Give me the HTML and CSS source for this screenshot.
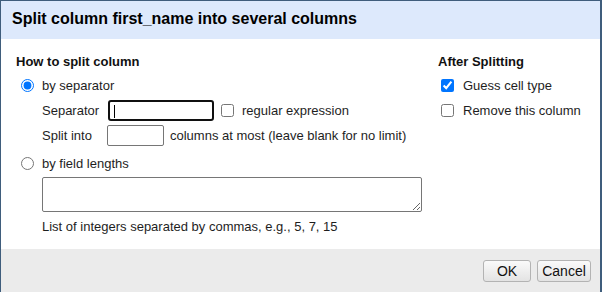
FILE: index.html
```html
<!DOCTYPE html>
<html lang="en">
<head>
  <meta charset="UTF-8">
  <title>Split column</title>
  <link rel="stylesheet" href="styles.css">
</head>
<body>
  <div class="dialog">
    <div class="header">Split column first_name into several columns</div>

    <div class="content">
      <div class="left">
        <h3>How to split column</h3>

        <label class="choice first">
          <input type="radio" name="mode" checked>
          <span>by separator</span>
        </label>

        <div class="field sep-row">
          <span class="field-label">Separator</span>
          <input type="text" class="text-input sep focused">
          <input type="checkbox" class="check">
          <span>regular expression</span>
        </div>

        <div class="field split-row">
          <span class="field-label">Split into</span>
          <input type="text" class="text-input count">
          <span>columns at most (leave blank for no limit)</span>
        </div>

        <label class="choice lengths">
          <input type="radio" name="mode">
          <span>by field lengths</span>
        </label>

        <textarea class="lengths-box"></textarea>
        <p class="hint">List of integers separated by commas, e.g., 5, 7, 15</p>
      </div>

      <div class="right">
        <h3>After Splitting</h3>
        <label class="option first">
          <input type="checkbox" class="check" checked>
          <span>Guess cell type</span>
        </label>
        <label class="option second">
          <input type="checkbox" class="check">
          <span>Remove this column</span>
        </label>
      </div>
    </div>

    <div class="footer">
      <button class="btn ok">OK</button>
      <button class="btn cancel">Cancel</button>
    </div>
  </div>
</body>
</html>
```

FILE: styles.css
```css
* {
  margin: 0;
  padding: 0;
  box-sizing: border-box;
}

body {
  font-family: 'Liberation Sans', Arial, sans-serif;
  font-size: 13px;
  color: #1e1e1e;
  background: white;
}

.dialog {
  width: 602px;
  height: 292px;
  border-top: 1px solid #3f5d7c;
  border-left: 1px solid #3f5d7c;
  border-right: 2px solid #3f5d7c;
  display: flex;
  flex-direction: column;
  overflow: hidden;
}

.header {
  height: 38px;
  flex-shrink: 0;
  background: #dde9fc;
  display: flex;
  align-items: center;
  padding-left: 11px;
  padding-bottom: 2px;
  font-size: 16px;
  font-weight: bold;
  color: #000;
}

.content {
  height: 210px;
  flex-shrink: 0;
  display: flex;
  padding: 15px 0 0 15px;
}

.left {
  width: 422px;
  display: flex;
  flex-direction: column;
}

h3 {
  font-size: 13px;
  line-height: 16px;
  font-weight: bold;
  color: #111;
}

.choice {
  display: flex;
  align-items: center;
  height: 16px;
}

.choice input {
  margin: 0 8px 0 5px;
  width: 13px;
  height: 13px;
  accent-color: #0075ff;
}

.choice.first {
  margin-top: 7px;
}

.choice.lengths {
  margin-top: 9px;
}

.field {
  display: flex;
  align-items: center;
  height: 22px;
  padding-left: 26px;
}

.sep-row {
  margin-top: 6px;
}

.split-row {
  margin-top: 3px;
}

.field-label {
  width: 65px;
  flex-shrink: 0;
}

.text-input {
  height: 21px;
  border: 1px solid #767676;
  border-radius: 2px;
  font: inherit;
  padding: 0 4px;
  background: white;
}

.text-input.sep {
  width: 106px;
  margin-left: 1px;
}

.text-input.focused {
  border: 2px solid #101010;
  border-radius: 3px;
  background: linear-gradient(#000, #000) no-repeat 4px 3px / 1px 13px, white;
}

.text-input.count {
  width: 57px;
  margin-right: 6px;
}

.check {
  width: 13px;
  height: 13px;
  margin: 0;
  accent-color: #0075ff;
}

.sep-row .check {
  margin: 0 8px 0 7px;
}

.lengths-box {
  width: 380px;
  height: 35px;
  margin: 6px 0 0 26px;
  border: 1px solid #767676;
  border-radius: 2px;
  resize: vertical;
  font: inherit;
}

.hint {
  margin: 7px 0 0 26px;
  line-height: 16px;
}

.right {
  display: flex;
  flex-direction: column;
}

.option {
  display: flex;
  align-items: center;
  height: 16px;
}

.option .check {
  margin: 0 9px 0 3px;
}

.option.first {
  margin-top: 7px;
}

.option.second {
  margin-top: 9px;
}

.footer {
  flex: 1;
  background: #ebebeb;
  display: flex;
  justify-content: flex-end;
  align-items: flex-start;
  gap: 6px;
  padding: 11px 9px 0 0;
}

.btn {
  height: 22px;
  padding: 0;
  border: 1px solid #b3b3b3;
  border-radius: 3px;
  background: linear-gradient(#fafafa, #e3e3e3);
  font-family: 'Liberation Sans', Arial, sans-serif;
  font-size: 14px;
  color: #111;
}

.btn.ok {
  width: 48px;
}

.btn.cancel {
  width: 54px;
}
```
